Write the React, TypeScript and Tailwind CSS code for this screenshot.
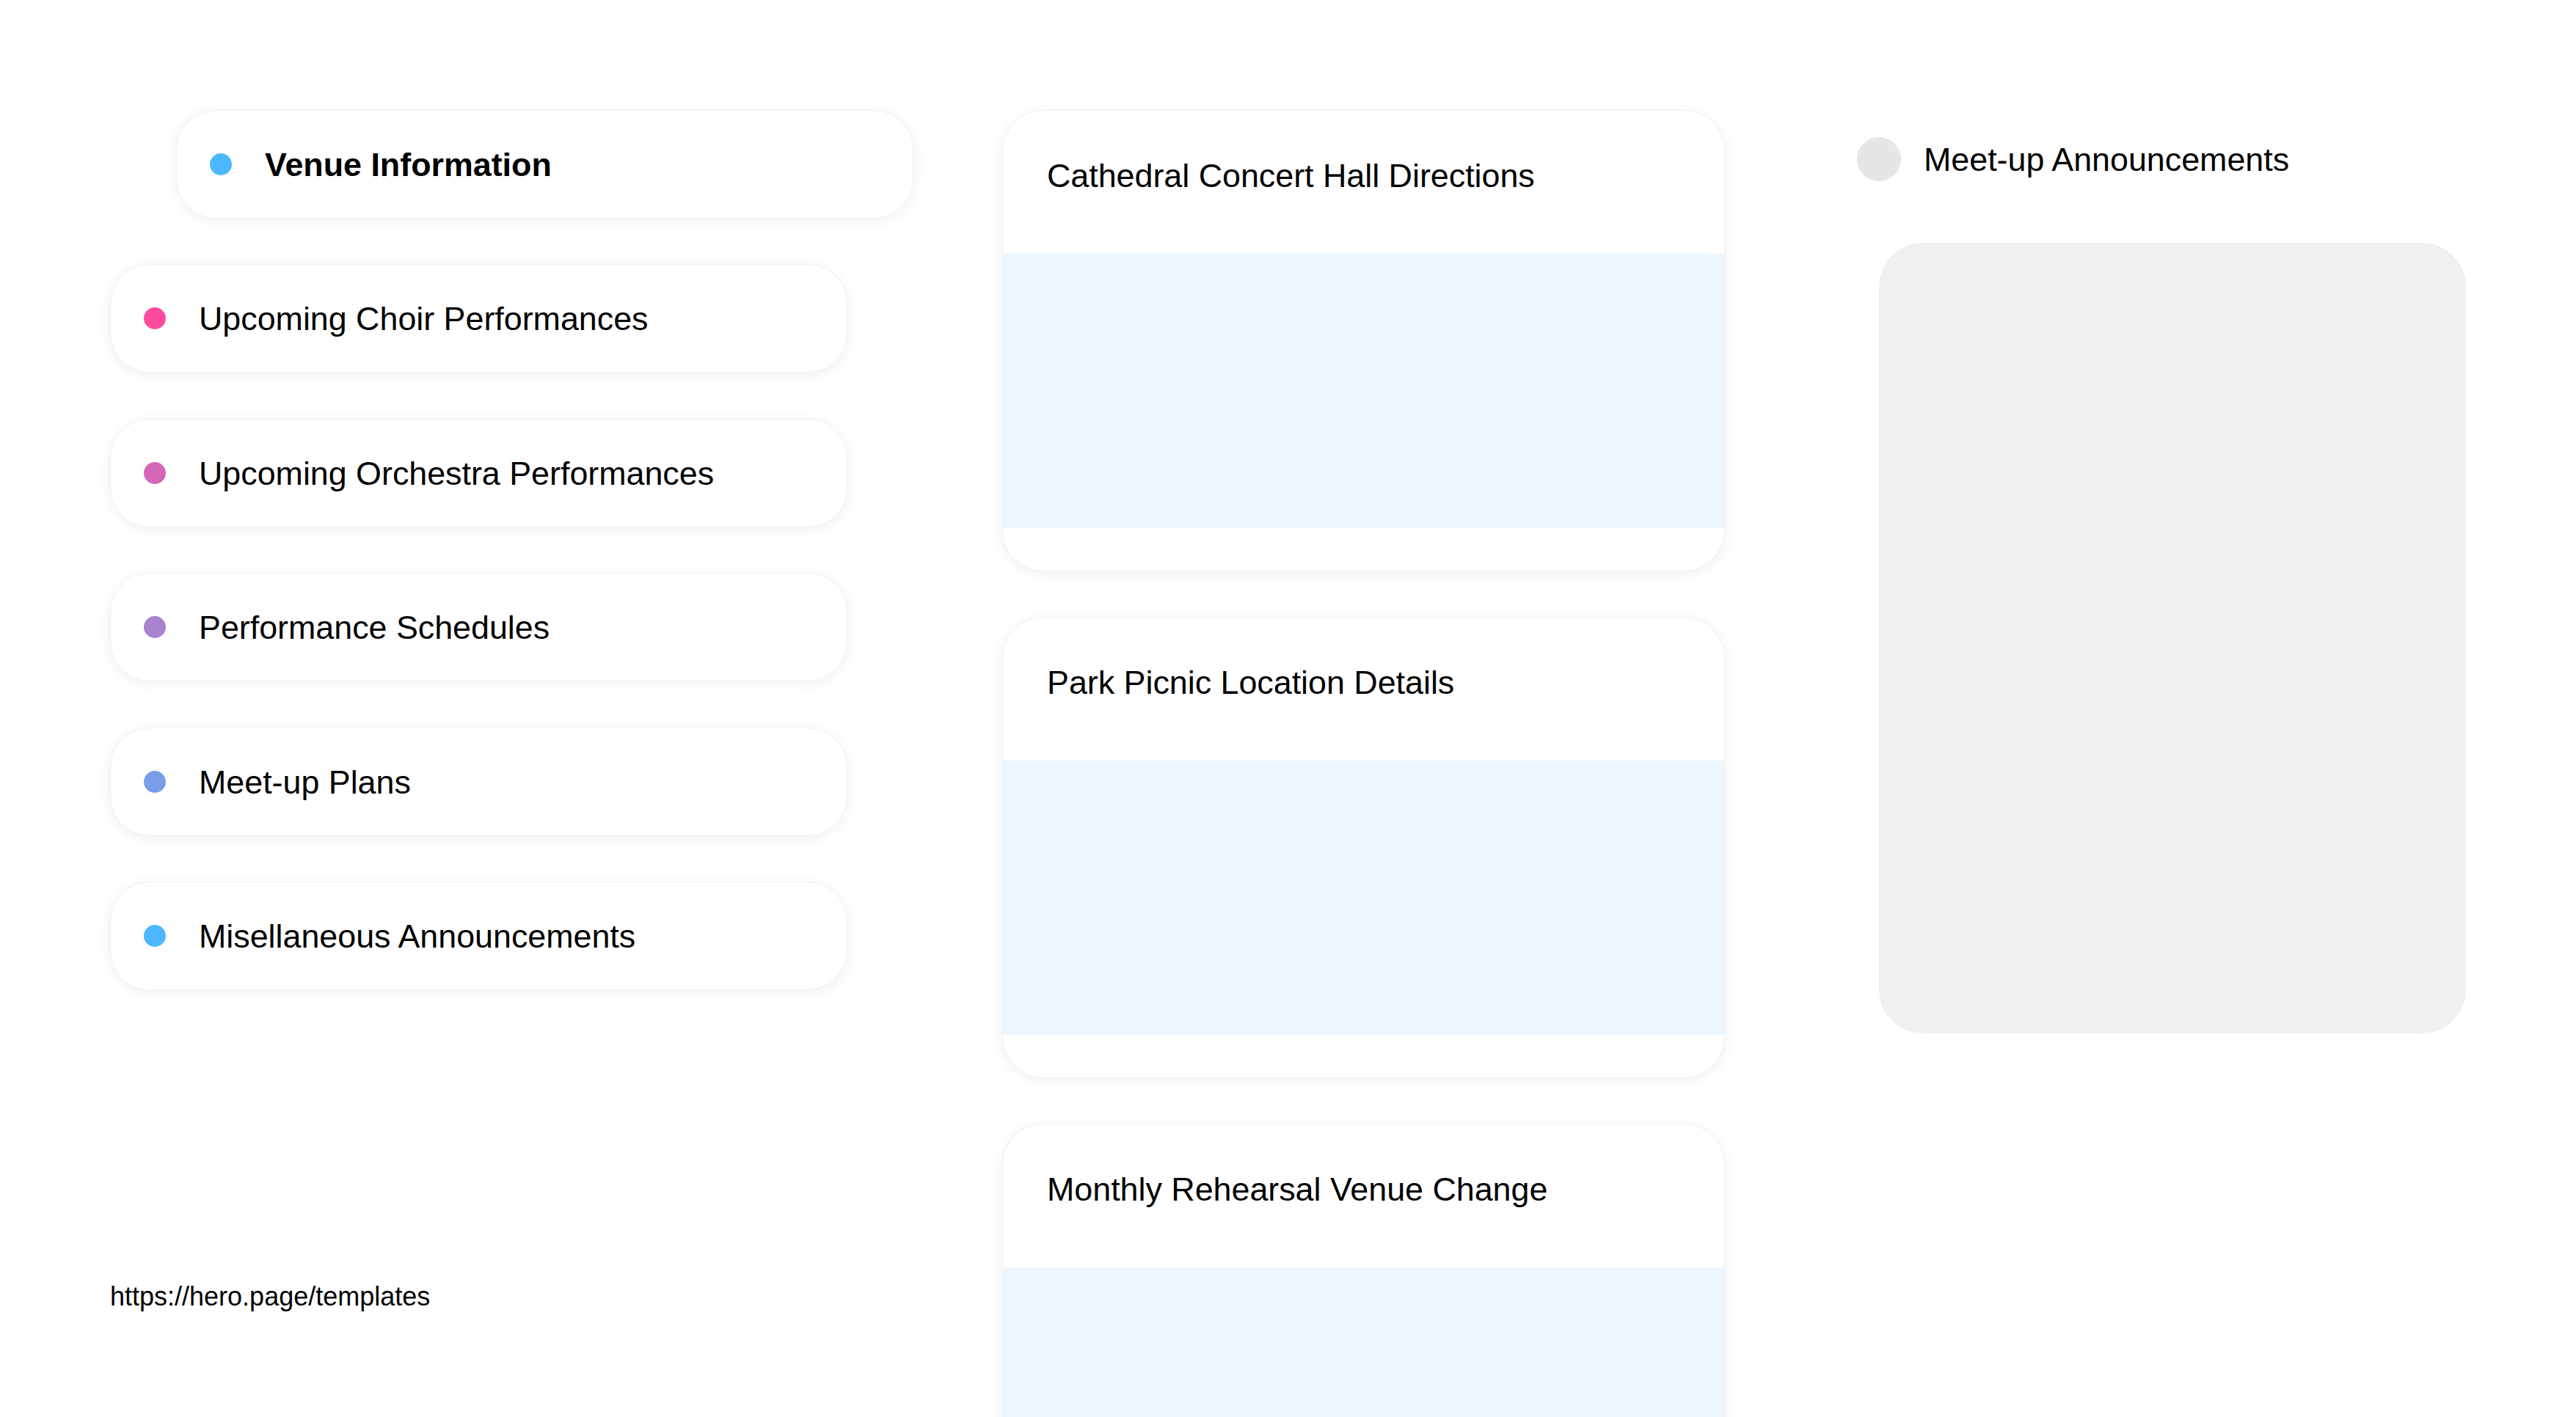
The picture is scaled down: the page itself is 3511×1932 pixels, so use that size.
import React from "react";

type Topic = { name: string; dot: string; active?: boolean };

const topics: Topic[] = [
  { name: "Venue Information", dot: "bg-[#4db8ff]", active: true },
  { name: "Upcoming Choir Performances", dot: "bg-[#ff4b9f]" },
  { name: "Upcoming Orchestra Performances", dot: "bg-[#d466b8]" },
  { name: "Performance Schedules", dot: "bg-[#a883d0]" },
  { name: "Meet-up Plans", dot: "bg-[#7a9de8]" },
  { name: "Misellaneous Announcements", dot: "bg-[#4db8ff]" },
];

const cards = [
  "Cathedral Concert Hall Directions",
  "Park Picnic Location Details",
  "Monthly Rehearsal Venue Change",
];

const TopicPill = ({ name, dot, active }: Topic) => (
  <div
    className={`flex items-center gap-[45px] w-[1005px] h-[148px] shrink-0 pl-[45px] rounded-[54px] bg-white border-[1.5px] border-[#f1f1f1] shadow-[0_3px_20px_rgba(0,0,0,0.06)] ${
      active ? "ml-[90px] font-bold" : ""
    }`}
  >
    <span className={`w-[30px] h-[30px] rounded-full shrink-0 ${dot}`}></span>
    <span className="text-[44.8px] leading-[52px] text-black">{name}</span>
  </div>
);

const VenueCard = ({ title }: { title: string }) => (
  <div className="w-[985px] h-[629px] shrink-0 flex flex-col rounded-[56px] bg-white overflow-hidden border-[1.5px] border-[#f1f1f1] shadow-[0_3px_20px_rgba(0,0,0,0.06)]">
    <div className="h-[195px] shrink-0 px-[60px] pt-[62px]">
      <h3 className="text-[44.8px] leading-[52px] text-black">{title}</h3>
    </div>
    <div className="h-[374px] shrink-0 bg-[#eef6fd]"></div>
    <div className="flex-1"></div>
  </div>
);

export default function App() {
  return (
    <div className="w-full h-[1932px] overflow-hidden bg-white flex font-['Liberation_Sans',Arial,sans-serif] text-black">
      {/* topics */}
      <div className="ml-[150px] mt-[150px] w-[1095px] shrink-0 flex flex-col">
        <div className="flex flex-col gap-[62.4px]">
          {topics.map((t) => (
            <TopicPill key={t.name} {...t} />
          ))}
        </div>
        <p className="mt-[397px] text-[36px] leading-[41px]">
          https://hero.page/templates
        </p>
      </div>

      {/* cards */}
      <div className="ml-[121px] mt-[150px] w-[985px] shrink-0 flex flex-col gap-[62px]">
        {cards.map((c) => (
          <VenueCard key={c} title={c} />
        ))}
      </div>

      {/* announcements */}
      <div className="ml-[180px] mt-[187px] shrink-0 flex flex-col">
        <div className="flex items-center gap-[31px] h-[60px]">
          <span className="w-[60px] h-[60px] rounded-full bg-[#e6e6e6]"></span>
          <span className="text-[44.8px] leading-[52px]">Meet-up Announcements</span>
        </div>
        <div className="ml-[30px] mt-[84px] w-[800px] h-[1078px] rounded-[60px] bg-[#f0f0f0]"></div>
      </div>
    </div>
  );
}
